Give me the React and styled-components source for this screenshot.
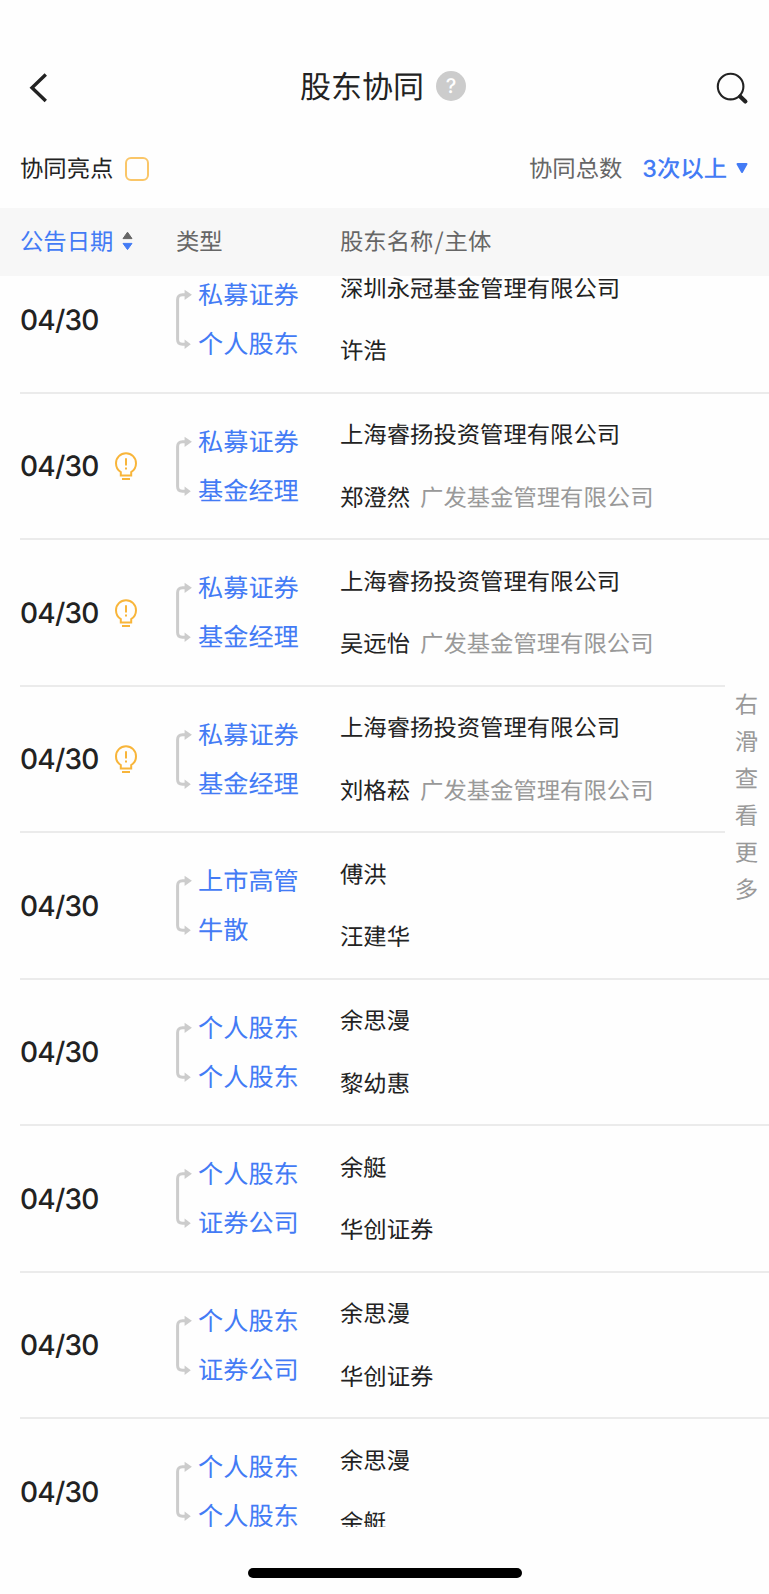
import React, { useState } from 'react'
import styled, { createGlobalStyle } from 'styled-components'

const company = '上海睿扬投资管理有限公司'
const fund = '广发基金管理有限公司'

const rows = [
  { date: '04/30', types: ['私募证券', '个人股东'], names: [['深圳永冠基金管理有限公司'], ['许浩']] },
  { date: '04/30', hot: true, types: ['私募证券', '基金经理'], names: [[company], ['郑澄然', fund]] },
  { date: '04/30', hot: true, types: ['私募证券', '基金经理'], names: [[company], ['吴远怡', fund]] },
  { date: '04/30', hot: true, types: ['私募证券', '基金经理'], names: [[company], ['刘格菘', fund]] },
  { date: '04/30', types: ['上市高管', '牛散'], names: [['傅洪'], ['汪建华']] },
  { date: '04/30', types: ['个人股东', '个人股东'], names: [['余思漫'], ['黎幼惠']] },
  { date: '04/30', types: ['个人股东', '证券公司'], names: [['余艇'], ['华创证券']] },
  { date: '04/30', types: ['个人股东', '证券公司'], names: [['余思漫'], ['华创证券']] },
  { date: '04/30', types: ['个人股东', '个人股东'], names: [['余思漫'], ['余艇']] },
]

const BackIcon = () => (
  <svg width='20' height='32' viewBox='0 0 20 32' fill='none' stroke='#222' strokeWidth='3.4'>
    <path d='M17.8 2.5 L4 15.7 L17.8 29' />
  </svg>
)

const SearchIcon = () => (
  <svg width='34' height='34' viewBox='0 0 34 34' fill='none' stroke='#222'>
    <circle cx='15.6' cy='15.6' r='12.8' strokeWidth='2.1' />
    <path d='M25.2 25.4 L30.4 30.4' strokeWidth='4.2' strokeLinecap='round' />
  </svg>
)

const BulbIcon = () => (
  <svg width='24' height='30' viewBox='0 0 24 30' fill='none' stroke='#f8b53a' strokeWidth='2'>
    <path d='M6.8 24.4 V21 C3.6 19 2 16 2 12.2 A10 10 0 0 1 22 12.2 C22 16 20.4 19 17.2 21 V24.4 Z' />
    <path d='M12 7.2 V14.6 M12 16.6 V18.6' />
    <path d='M8 28 H16' />
  </svg>
)

const LinkIcon = () => (
  <svg width='18' height='62' viewBox='0 0 18 62' fill='none' stroke='#ccc' strokeWidth='3'>
    <path d='M10 6.8 H6.5 Q1.6 6.8 1.6 11.5 V51.5 Q1.6 56.2 6.5 56.2 H10' />
    <path d='M8.6 1.7 L15.9 6.8 L8.6 11.9 Z M8.6 51.4 L14.8 56.2 L8.6 61 Z' fill='#ccc' stroke='none' />
  </svg>
)

const SortIcon = () => (
  <svg width='11' height='20' viewBox='0 0 11 20'>
    <path d='M5.5 1.2 L10 7.6 H1 Z' fill='#666' stroke='#666' strokeLinejoin='round' />
    <path d='M5.5 18.6 L10 12.4 H1 Z' fill='#437bf5' stroke='#437bf5' strokeLinejoin='round' />
  </svg>
)

const CaretIcon = () => (
  <svg width='12' height='12' viewBox='0 0 12 12'>
    <path d='M1.5 2 H10.5 L6 10 Z' fill='#437bf5' stroke='#437bf5' strokeWidth='2' strokeLinejoin='round' />
  </svg>
)

const App = () => {
  const [onlyHot, setOnlyHot] = useState(false)
  const list = onlyHot ? rows.filter((row) => row.hot) : rows

  return (
    <Page>
      <GlobalStyle />
      <TitleBar>
        <BackIcon />
        <Title>
          股东协同
          <Help>?</Help>
        </Title>
        <SearchIcon />
      </TitleBar>
      <FilterBar>
        <Highlight>
          协同亮点
          <CheckBox checked={onlyHot} onChange={() => setOnlyHot(!onlyHot)} />
        </Highlight>
        <Total>
          协同总数
          <Count>3次以上</Count>
          <CaretIcon />
        </Total>
      </FilterBar>
      <TableHead>
        <HeadCell $active>
          公告日期
          <SortIcon />
        </HeadCell>
        <HeadCell>类型</HeadCell>
        <HeadCell>
          股东名称<Slash>/</Slash>主体
        </HeadCell>
      </TableHead>
      <ListArea>
        <List>
          {list.map((row, index) => (
            <Row key={index}>
              <DateCell>
                {row.date}
                {row.hot && <BulbIcon />}
              </DateCell>
              <TypeCell>
                <LinkIcon />
                <TypeNames>
                  {row.types.map((type, i) => (
                    <span key={i}>{type}</span>
                  ))}
                </TypeNames>
              </TypeCell>
              <NameCell>
                {row.names.map(([name, org]) => (
                  <Name key={name}>
                    {name}
                    {org && <Org>{org}</Org>}
                  </Name>
                ))}
              </NameCell>
            </Row>
          ))}
        </List>
        <SwipeHint>
          {[...'右滑查看更多'].map((char) => (
            <span key={char}>{char}</span>
          ))}
        </SwipeHint>
      </ListArea>
      <Footer>
        <HomeIndicator />
      </Footer>
    </Page>
  )
}

const GlobalStyle = createGlobalStyle`
  * {
    box-sizing: border-box;
  }
  body {
    margin: 0;
    background: #fff;
    text-rendering: geometricPrecision;
  }
  svg {
    display: block;
    flex-shrink: 0;
  }
`

const Page = styled.main`
  display: flex;
  flex-direction: column;
  height: 1594px;
  overflow: hidden;
  background: #fefefe;
  color: #222;
  font-family: 'Noto Sans CJK SC', sans-serif;
  font-size: 23.35px;
  font-weight: 400;
`

const TitleBar = styled.header`
  display: flex;
  align-items: center;
  justify-content: space-between;
  height: 128px;
  padding: 48px 20px 0 28px;
`

const Title = styled.h1`
  display: flex;
  align-items: center;
  gap: 12px;
  margin: 0 0 0 3px;
  padding-bottom: 8px;
  font-size: 31px;
  font-weight: 400;
`

const Help = styled.span`
  width: 30px;
  height: 30px;
  margin-top: 4px;
  border-radius: 50%;
  background: #ccc;
  color: #fff;
  font: 500 20px/31px Inter, sans-serif;
  text-align: center;
`

const FilterBar = styled.section`
  display: flex;
  align-items: center;
  justify-content: space-between;
  height: 80px;
  padding: 0 21px 2px 20px;
`

const Highlight = styled.label`
  display: flex;
  align-items: center;
  gap: 12px;
`

const CheckBox = styled.input.attrs({ type: 'checkbox' })`
  appearance: none;
  width: 24px;
  height: 24px;
  margin: 4px 0 0;
  border: 2px solid #fac668;
  border-radius: 6px;
  background: ${({ checked }) => (checked ? '#fac668' : 'transparent')};
`

const Total = styled.div`
  display: flex;
  align-items: center;
  color: #666;
  svg {
    margin-top: 2px;
  }
`

const Count = styled.b`
  margin: 0 9px 0 20px;
  color: #437bf5;
  font-family: Inter, 'Noto Sans CJK SC', sans-serif;
  font-weight: 500;
`

const TableHead = styled.div`
  display: grid;
  grid-template-columns: 156px 164px 1fr;
  align-items: center;
  height: 68px;
  padding: 0 0 4px 20px;
  background: #f7f7f7;
`

const HeadCell = styled.div`
  display: flex;
  align-items: center;
  color: ${({ $active }) => ($active ? '#437bf5' : '#666')};
  svg {
    margin: 2px 0 0 9px;
  }
`

const Slash = styled.span`
  margin: 0 1px;
`

const ListArea = styled.section`
  position: relative;
  height: 1251px;
  overflow: hidden;
`

/* list is scrolled a little under the table head */
const List = styled.div`
  margin-top: -29px;
  padding-left: 20px;
`

const Row = styled.div`
  display: grid;
  grid-template-columns: 156px 164px 1fr;
  height: 146.5px;
  align-items: center;
  border-bottom: 2px solid #ebebeb;
`

const DateCell = styled.div`
  display: flex;
  align-items: center;
  gap: 15px;
  padding-top: 1px;
  font-family: Inter, sans-serif;
  font-size: 28px;
  font-weight: 500;
  letter-spacing: -0.75px;
`

const TypeCell = styled.div`
  display: flex;
  align-items: center;
  gap: 4px;
`

const TypeNames = styled.div`
  display: flex;
  flex-direction: column;
  color: #437bf5;
  font-size: 25.2px;
  line-height: 48.9px;
`

const NameCell = styled.div`
  padding-bottom: 2px;
  line-height: 62.4px;
`

const Name = styled.div`
  white-space: nowrap;
`

const Org = styled.span`
  margin-left: 10px;
  color: #999;
`

const SwipeHint = styled.aside`
  position: absolute;
  top: 409px;
  right: 0;
  display: flex;
  flex-direction: column;
  align-items: center;
  width: 44px;
  padding-right: 1px;
  background: #fefefe;
  color: #999;
  line-height: 37.1px;
`

const Footer = styled.footer`
  display: flex;
  flex: 1;
  justify-content: center;
  padding: 41px 0 0;
`

const HomeIndicator = styled.div`
  width: 274px;
  height: 10px;
  border-radius: 5px;
  background: #000;
`

export default App
